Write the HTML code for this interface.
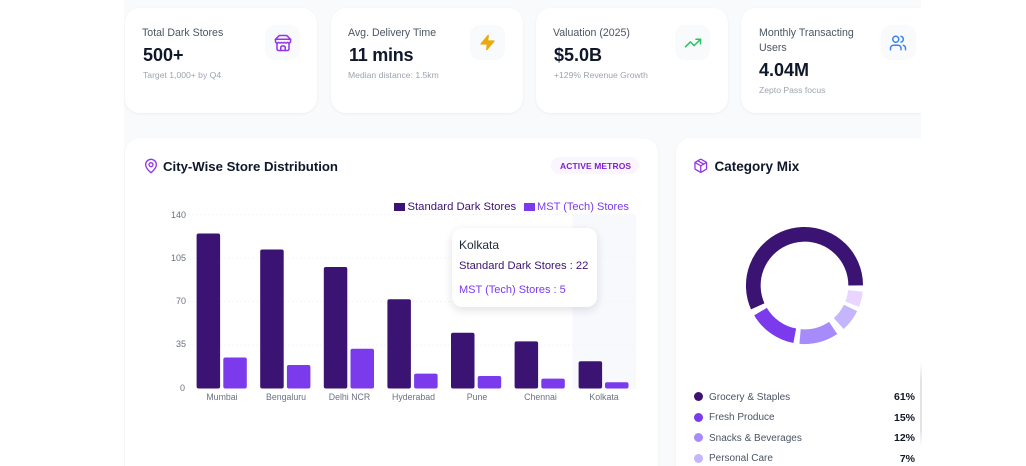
<!DOCTYPE html>
<html><head><meta charset="utf-8"><style>
html,body{margin:0;padding:0;background:#fff}
body{width:1026px;height:466px;overflow:hidden;position:relative;font-family:"Liberation Sans",sans-serif;filter:blur(.3px)}
#bg{position:absolute;left:124px;top:0;width:797px;height:466px;background:#f8fafc;overflow:hidden}
.c{position:absolute;background:#fff;border-radius:15px;box-shadow:0 1px 3px rgba(15,23,42,.05)}
.t{position:absolute;white-space:nowrap;line-height:1}
.l{font-size:10.6px;color:#4b5563}
.v{font-size:18px;font-weight:700;color:#0f172a}
.s{font-size:8.6px;color:#9ca3af}
.b{position:absolute;width:35px;height:35px;border-radius:10px;background:#f9fafb}
svg.i{position:absolute;fill:none;stroke-width:2;stroke-linecap:round;stroke-linejoin:round}
.h{font-size:13.2px;font-weight:700;color:#0f172a}
.y{font-size:9px;color:#6b7280}
.x{font-size:8.8px;color:#6b7280;transform:translateX(-50%)}
.n{font-size:10px;color:#4b5563}
.p{font-size:10.5px;font-weight:700;color:#111827;right:111px}
.d{position:absolute;width:9px;height:9px;border-radius:50%}
</style></head><body>
<div id="bg"></div>
<div style="position:absolute;left:0;top:0;width:921px;height:466px;overflow:hidden">
<div class="c" style="left:125px;top:8px;width:192px;height:105px"></div>
<div class="c" style="left:331px;top:8px;width:192px;height:105px"></div>
<div class="c" style="left:536px;top:8px;width:192px;height:105px"></div>
<div class="c" style="left:741px;top:8px;width:200px;height:105px"></div>
<div class="c" style="left:125px;top:138px;width:533px;height:350px"></div>
<div class="c" style="left:676px;top:138px;width:280px;height:350px"></div>
</div>

<span class="t l" style="left:142px;top:27.5px">Total Dark Stores</span>
<span class="t v" style="left:143px;top:46px">500+</span>
<span class="t s" style="left:143px;top:71px">Target 1,000+ by Q4</span>
<div class="b" style="left:265px;top:25px"></div>
<svg class="i" style="left:273.5px;top:34px" width="18" height="18" viewBox="0 0 24 24" stroke="#9333ea"><path d="m2 7 4.41-4.41A2 2 0 0 1 7.83 2h8.34a2 2 0 0 1 1.42.59L22 7"/><path d="M4 12v8a2 2 0 0 0 2 2h12a2 2 0 0 0 2-2v-8"/><path d="M15 22v-4a2 2 0 0 0-2-2h-2a2 2 0 0 0-2 2v4"/><path d="M2 7h20"/><path d="M22 7v3a2 2 0 0 1-2 2a2.7 2.7 0 0 1-1.59-.63.7.7 0 0 0-.82 0A2.7 2.7 0 0 1 16 12a2.7 2.7 0 0 1-1.59-.63.7.7 0 0 0-.82 0A2.7 2.7 0 0 1 12 12a2.7 2.7 0 0 1-1.59-.63.7.7 0 0 0-.82 0A2.7 2.7 0 0 1 8 12a2.7 2.7 0 0 1-1.59-.63.7.7 0 0 0-.82 0A2.7 2.7 0 0 1 4 12a2 2 0 0 1-2-2V7"/></svg>

<span class="t l" style="left:348px;top:27.5px">Avg. Delivery Time</span>
<span class="t v" style="left:349px;top:46px;letter-spacing:-.25px">11 mins</span>
<span class="t s" style="left:348px;top:71px">Median distance: 1.5km</span>
<div class="b" style="left:470px;top:25px"></div>
<svg class="i" style="left:479px;top:34px" width="17" height="17" viewBox="0 0 24 24" stroke="#eaaa08"><path fill="#eaaa08" d="M13 2 3 14h9l-1 8 10-12h-9l1-8z"/></svg>

<span class="t l" style="left:553px;top:27.5px">Valuation (2025)</span>
<span class="t v" style="left:554px;top:46px">$5.0B</span>
<span class="t s" style="left:554px;top:71px">+129% Revenue Growth</span>
<div class="b" style="left:675px;top:25px"></div>
<svg class="i" style="left:683.5px;top:33.5px" width="18" height="18" viewBox="0 0 24 24" stroke="#22c55e"><polyline points="22 7 13.5 15.5 8.5 10.5 2 17"/><polyline points="16 7 22 7 22 13"/></svg>

<span class="t l" style="left:759px;top:27.5px">Monthly Transacting</span>
<span class="t l" style="left:759px;top:42.5px">Users</span>
<span class="t v" style="left:759px;top:61px">4.04M</span>
<span class="t s" style="left:759px;top:86px">Zepto Pass focus</span>
<div class="b" style="left:881px;top:25px"></div>
<svg class="i" style="left:889px;top:34px" width="18" height="18" viewBox="0 0 24 24" stroke="#3b82f6"><path d="M16 21v-2a4 4 0 0 0-4-4H6a4 4 0 0 0-4 4v2"/><circle cx="9" cy="7" r="4"/><path d="M22 21v-2a4 4 0 0 0-3-3.87"/><path d="M16 3.13a4 4 0 0 1 0 7.75"/></svg>

<svg class="i" style="left:142.5px;top:158px" width="16" height="16" viewBox="0 0 24 24" stroke="#9333ea"><path d="M20 10c0 6-8 12-8 12s-8-6-8-12a8 8 0 0 1 16 0Z"/><circle cx="12" cy="10" r="3"/></svg>
<span class="t h" style="left:163px;top:160px">City-Wise Store Distribution</span>
<div style="position:absolute;left:551px;top:157px;width:88px;height:17px;border-radius:9px;background:#faf5ff"></div>
<span class="t" style="left:560px;top:162px;font-size:8.5px;font-weight:700;color:#7e22ce;letter-spacing:.1px">ACTIVE METROS</span>

<div style="position:absolute;left:394px;top:203px;width:11px;height:8px;background:#3b1372"></div>
<span class="t" style="left:407.5px;top:202px;font-size:11.3px;color:#3b1372">Standard Dark Stores</span>
<div style="position:absolute;left:523.5px;top:203px;width:11px;height:8px;background:#7c3aed"></div>
<span class="t" style="left:537px;top:202px;font-size:11.05px;color:#7c3aed">MST (Tech) Stores</span>

<svg style="position:absolute;left:0;top:0" width="1026" height="466">
<rect x="572.6" y="215" width="63.4" height="174" fill="#f7f9fd"/>
<g stroke="#f5f5f7" stroke-width="1" stroke-dasharray="2 2">
<line x1="172" x2="636" y1="214.5" y2="214.5"/><line x1="172" x2="636" y1="258" y2="258"/><line x1="172" x2="636" y1="301.5" y2="301.5"/><line x1="172" x2="636" y1="345" y2="345"/></g>
<g fill="#3b1372">
<rect x="196.6" y="233.5" width="23.5" height="155" rx="2"/>
<rect x="260.2" y="249.5" width="23.5" height="139" rx="2"/>
<rect x="323.8" y="267" width="23.5" height="121.5" rx="2"/>
<rect x="387.4" y="299.2" width="23.5" height="89.3" rx="2"/>
<rect x="451" y="332.7" width="23.5" height="55.8" rx="2"/>
<rect x="514.6" y="341.4" width="23.5" height="47.1" rx="2"/>
<rect x="578.6" y="361.2" width="23.5" height="27.3" rx="2"/></g>
<g fill="#7c3aed">
<rect x="223.3" y="357.5" width="23.5" height="31" rx="2"/>
<rect x="286.9" y="365" width="23.5" height="23.5" rx="2"/>
<rect x="350.5" y="348.8" width="23.5" height="39.7" rx="2"/>
<rect x="414.1" y="373.6" width="23.5" height="14.9" rx="2"/>
<rect x="477.7" y="376" width="23.5" height="12.5" rx="2"/>
<rect x="541.3" y="378.6" width="23.5" height="9.9" rx="2"/>
<rect x="605" y="382.3" width="23.5" height="6.2" rx="2"/></g>
<g fill="none" stroke-width="14.7">
<circle cx="804.5" cy="285.5" r="51.2" pathLength="360" stroke="#3b1372" stroke-dasharray="204 360" transform="rotate(-204 804.5 285.5)"/>
<circle cx="804.5" cy="285.5" r="51.2" pathLength="360" stroke="#7c3aed" stroke-dasharray="48.3 360" transform="rotate(-259 804.5 285.5)"/>
<circle cx="804.5" cy="285.5" r="51.2" pathLength="360" stroke="#a78bfa" stroke-dasharray="39 360" transform="rotate(-304 804.5 285.5)"/>
<circle cx="804.5" cy="285.5" r="51.2" pathLength="360" stroke="#c4b5fd" stroke-dasharray="22 360" transform="rotate(-334 804.5 285.5)"/>
<circle cx="804.5" cy="285.5" r="51.2" pathLength="360" stroke="#e9d5ff" stroke-dasharray="15.5 360" transform="rotate(-354 804.5 285.5)"/>
</g>
</svg>

<span class="t y" style="left:171px;top:210.5px">140</span>
<span class="t y" style="left:171px;top:253.5px">105</span>
<span class="t y" style="left:176px;top:296.5px">70</span>
<span class="t y" style="left:176px;top:340px">35</span>
<span class="t y" style="left:180px;top:383.5px">0</span>
<span class="t x" style="left:222px;top:393px">Mumbai</span>
<span class="t x" style="left:286px;top:393px">Bengaluru</span>
<span class="t x" style="left:349.5px;top:393px">Delhi NCR</span>
<span class="t x" style="left:413.5px;top:393px">Hyderabad</span>
<span class="t x" style="left:477px;top:393px">Pune</span>
<span class="t x" style="left:540.5px;top:393px">Chennai</span>
<span class="t x" style="left:604px;top:393px">Kolkata</span>

<div style="position:absolute;left:452px;top:228px;width:145px;height:79px;background:#fff;border-radius:10px;box-shadow:0 3px 9px rgba(15,23,42,.13)"></div>
<span class="t" style="left:459px;top:239px;font-size:12px;color:#1f2937">Kolkata</span>
<span class="t" style="left:459px;top:261px;font-size:11.2px;color:#3b1372">Standard Dark Stores : 22</span>
<span class="t" style="left:459px;top:284.5px;font-size:11px;color:#7c3aed">MST (Tech) Stores : 5</span>

<svg class="i" style="left:693px;top:158px" width="15.5" height="15.5" viewBox="0 0 24 24" stroke="#9333ea"><path d="M21 8a2 2 0 0 0-1-1.73l-7-4a2 2 0 0 0-2 0l-7 4A2 2 0 0 0 3 8v8a2 2 0 0 0 1 1.73l7 4a2 2 0 0 0 2 0l7-4A2 2 0 0 0 21 16Z"/><path d="m3.3 7 8.7 5 8.7-5"/><path d="M12 22V12"/><path d="m7.5 4.27 9 5.15"/></svg>
<span class="t h" style="left:714.5px;top:160px;font-size:13.5px">Category Mix</span>

<div class="d" style="left:694px;top:392px;background:#3b1372"></div>
<span class="t n" style="left:709px;top:393px">Grocery &amp; Staples</span><span class="t p" style="top:392px">61%</span>
<div class="d" style="left:694px;top:412.5px;background:#7c3aed"></div>
<span class="t n" style="left:709px;top:413px">Fresh Produce</span><span class="t p" style="top:412.5px">15%</span>
<div class="d" style="left:694px;top:433px;background:#a78bfa"></div>
<span class="t n" style="left:709px;top:434px">Snacks &amp; Beverages</span><span class="t p" style="top:433px">12%</span>
<div class="d" style="left:694px;top:453.5px;background:#c4b5fd"></div>
<span class="t n" style="left:709px;top:454px">Personal Care</span><span class="t p" style="top:453.5px">7%</span>

<div style="position:absolute;left:920px;top:363px;width:1.5px;height:84px;background:linear-gradient(#e5e7eb00,#e2e4e8 20%,#e2e4e8 80%,#e5e7eb00)"></div>
</body></html>
